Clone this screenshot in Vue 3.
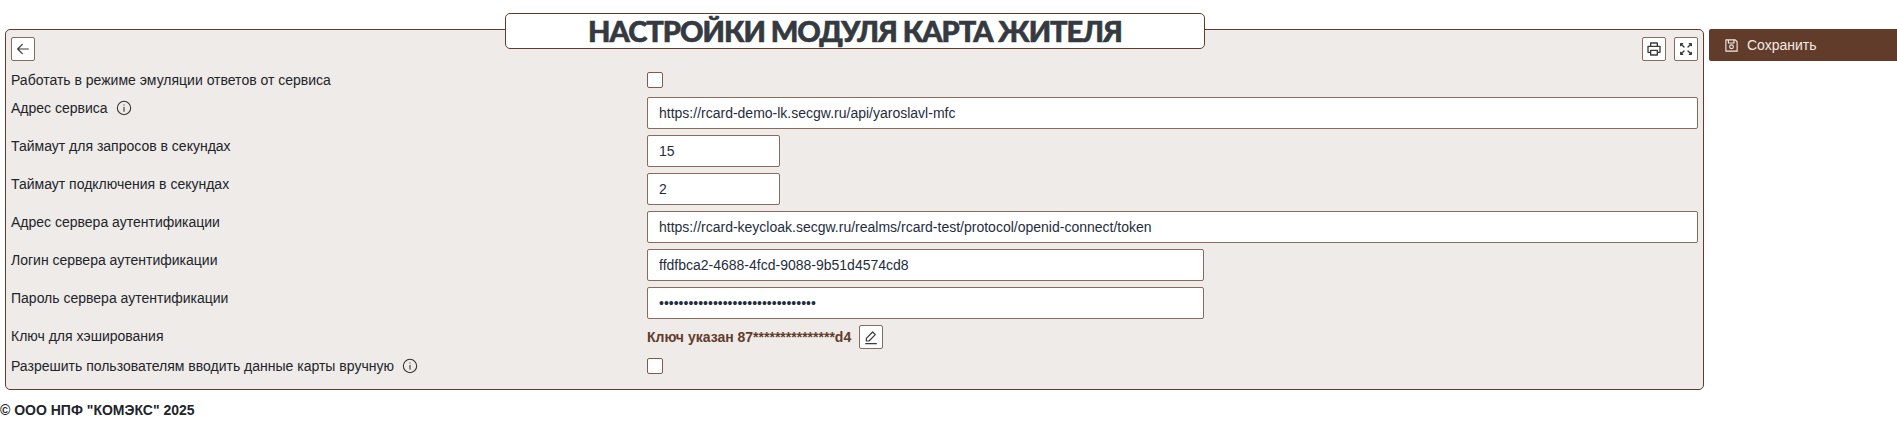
<template>
  <div class="page">
    <div class="top">
      <main class="panel">
        <h1 class="title">НАСТРОЙКИ МОДУЛЯ КАРТА ЖИТЕЛЯ</h1>

        <div class="toolbar">
          <button class="icon-btn" type="button">
            <svg width="16" height="16" viewBox="0 0 24 24" fill="none" stroke="#3a3a3a" stroke-width="1.8" stroke-linecap="round" stroke-linejoin="round">
              <path d="M20 12H4M11 5l-7 7 7 7" />
            </svg>
          </button>
          <div class="toolbar-right">
            <button class="icon-btn" type="button">
              <svg width="16" height="16" viewBox="0 0 24 24" fill="none" stroke="#3a3a3a" stroke-width="2" stroke-linejoin="round">
                <path d="M7 8V3h10v5M7 17H3V8h18v9h-4M7 14h10v7H7z" />
              </svg>
            </button>
            <button class="icon-btn" type="button">
              <svg width="16" height="16" viewBox="0 0 24 24" fill="none" stroke="#3a3a3a" stroke-width="2" stroke-linecap="round">
                <path d="M4 4l5 5M20 4l-5 5M4 20l5-5M20 20l-5-5M4 4h3M4 4v3M20 4h-3M20 4v3M4 20h3M4 20v-3M20 20h-3M20 20v-3" />
              </svg>
            </button>
          </div>
        </div>

        <div class="form">
          <template v-for="row in rows" :key="row.label">
            <div class="label" :class="{ middle: row.type === 'check' }">
              {{ row.label }}
              <svg v-if="row.info" class="info" width="16" height="16" viewBox="0 0 24 24" fill="none" stroke="#333" stroke-width="1.6" stroke-linecap="round">
                <circle cx="12" cy="12" r="10" />
                <path d="M12 11v6M12 7v.5" />
              </svg>
            </div>
            <div class="control">
              <input v-if="row.type === 'check'" class="check" type="checkbox" />
              <div v-else-if="row.type === 'key'" class="key">
                <b>Ключ указан 87***************d4</b>
                <button class="icon-btn" type="button">
                  <svg width="16" height="16" viewBox="0 0 24 24" fill="none" stroke="#3a3a3a" stroke-width="1.8" stroke-linejoin="round" stroke-linecap="round">
                    <path d="M14.5 4.5l4 4L9 18H5v-4zM4 22h16" />
                  </svg>
                </button>
              </div>
              <input v-else class="field" :class="row.size" :type="row.type" :value="row.value" />
            </div>
          </template>
        </div>
      </main>

      <aside class="side">
        <button class="save" type="button">
          <svg width="15" height="15" viewBox="0 0 24 24" fill="none" stroke="#f3ebe6" stroke-width="1.8" stroke-linejoin="round">
            <path d="M3 3h15l3 3v15H3zM7 3v5h9V3" />
            <circle cx="12" cy="14" r="3" />
          </svg>
          Сохранить
        </button>
      </aside>
    </div>
    <footer class="footer">© ООО НПФ "КОМЭКС" 2025</footer>
  </div>
</template>

<script setup>
const rows = [
  { label: 'Работать в режиме эмуляции ответов от сервиса', type: 'check' },
  { label: 'Адрес сервиса', info: true, type: 'text', size: 'full', value: 'https://rcard-demo-lk.secgw.ru/api/yaroslavl-mfc' },
  { label: 'Таймаут для запросов в секундах', type: 'text', size: 'small', value: '15' },
  { label: 'Таймаут подключения в секундах', type: 'text', size: 'small', value: '2' },
  { label: 'Адрес сервера аутентификации', type: 'text', size: 'full', value: 'https://rcard-keycloak.secgw.ru/realms/rcard-test/protocol/openid-connect/token' },
  { label: 'Логин сервера аутентификации', type: 'text', size: 'mid', value: 'ffdfbca2-4688-4fcd-9088-9b51d4574cd8' },
  { label: 'Пароль сервера аутентификации', type: 'password', size: 'mid', value: '12345678901234567890123456789012' },
  { label: 'Ключ для хэширования', type: 'key' },
  { label: 'Разрешить пользователям вводить данные карты вручную', info: true, type: 'check' }
]
</script>

<style>
body {
  margin: 0;
  background: #fff;
}
</style>

<style scoped>
.page {
  font-family: "Liberation Sans", Arial, sans-serif;
  font-size: 14px;
  line-height: 20px;
  color: #212529;
}

.top {
  display: flex;
  align-items: flex-start;
  padding-top: 29px;
  padding-left: 5px;
}

.panel {
  position: relative;
  box-sizing: border-box;
  width: 699px;
  flex: 1;
  background: #efebe9;
  border: 1px solid #623c2b;
  border-radius: 5px;
  padding: 7px 5px 12px 5px;
}

.title {
  position: absolute;
  top: -17px;
  left: 499px;
  box-sizing: border-box;
  width: 700px;
  height: 36px;
  margin: 0;
  background: #fff;
  border: 1px solid #623c2b;
  border-radius: 5px;
  font-family: Lato, "Open Sans", sans-serif;
  font-size: 29px;
  font-weight: 900;
  line-height: 34px;
  letter-spacing: -1px;
  -webkit-text-stroke: 0.6px #343a40;
  text-align: center;
  color: #343a40;
}

.toolbar {
  display: flex;
  justify-content: space-between;
  margin-bottom: 8px;
}

.toolbar-right {
  display: flex;
  gap: 8px;
}

.icon-btn {
  display: flex;
  align-items: center;
  justify-content: center;
  box-sizing: border-box;
  width: 24px;
  height: 24px;
  padding: 0;
  background: #fff;
  border: 1px solid #8a6a5a;
  border-radius: 2px;
}

.form {
  display: grid;
  grid-template-columns: 636px 1fr;
  row-gap: 6px;
}

.label {
  display: flex;
  align-items: flex-start;
  gap: 8px;
  padding-top: 1px;
}

.label.middle {
  align-items: center;
  padding-top: 0;
}

.info {
  margin-top: 2px;
}

.label.middle .info {
  margin-top: 0;
}

.control {
  display: flex;
  align-items: center;
  min-height: 22px;
}

.check {
  appearance: none;
  box-sizing: border-box;
  width: 16px;
  height: 16px;
  margin: 0;
  background: #fff;
  border: 1px solid #7d5b4c;
  border-radius: 2px;
}

.field {
  box-sizing: border-box;
  height: 32px;
  padding: 0 11px;
  background: #fff;
  border: 1px solid #8a6a5a;
  border-radius: 2px;
  font-family: inherit;
  font-size: 14px;
  color: #1f2d3d;
}

.field.full {
  width: 100%;
}

.field.mid {
  width: 557px;
}

.field.small {
  width: 133px;
}

.key {
  display: flex;
  align-items: center;
  gap: 8px;
  color: #623c2b;
}

.side {
  flex: none;
  width: 188px;
  margin-left: 5px;
}

.save {
  display: flex;
  align-items: center;
  gap: 8px;
  box-sizing: border-box;
  width: 100%;
  height: 32px;
  padding: 0 0 0 15px;
  background: #623c2b;
  border: 0;
  border-radius: 2px 0 0 2px;
  font-family: inherit;
  font-size: 14px;
  color: #f3ebe6;
}

.footer {
  margin-top: 10px;
  font-weight: 700;
  font-size: 14px;
  line-height: 20px;
  color: #212529;
}
</style>
